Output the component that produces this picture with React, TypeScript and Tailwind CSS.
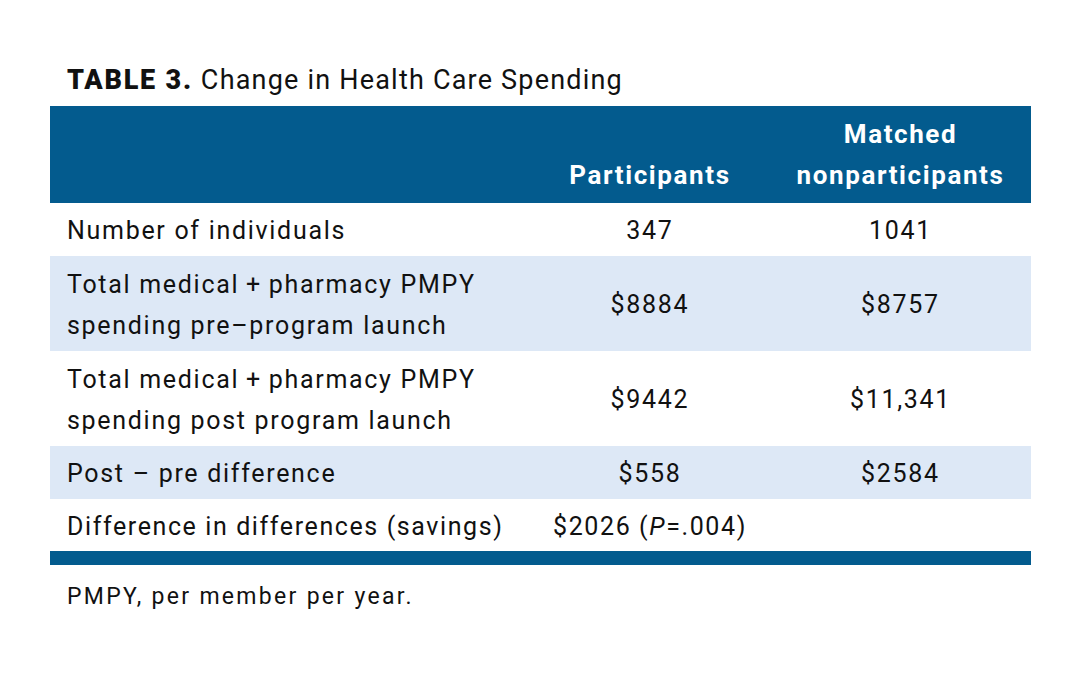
const rows = [
  { label: ["Number of individuals"], a: "347", b: "1041", shade: false },
  { label: ["Total medical\u2009+\u2009pharmacy PMPY", "spending pre\u2013program launch"], a: "$8884", b: "$8757", shade: true },
  { label: ["Total medical\u2009+\u2009pharmacy PMPY", "spending post program launch"], a: "$9442", b: "$11,341", shade: false },
  { label: ["Post \u2013 pre difference"], a: "$558", b: "$2584", shade: true },
];

export default function App() {
  return (
    <div className="w-[1081px] h-[673px] bg-white font-['Roboto',sans-serif] text-[#111] pt-[63px] pl-[50px]">
      <h1 className="pl-[17px] text-[27px] leading-[34px] tracking-[1.2px]">
        <span className="font-black tracking-[1.8px]">TABLE 3.</span> Change in Health Care Spending
      </h1>

      <div className="w-[981px] mt-[9px]">
        {/* header */}
        <div className="grid grid-cols-[480px_240px_261px] bg-[#035b8e] h-[97px] text-white font-bold text-[26px] leading-[41px] tracking-[1.6px]">
          <div />
          <div className="flex items-end justify-center pb-[7px]">Participants</div>
          <div className="flex flex-col items-center justify-end pb-[7px]">
            <span>Matched</span>
            <span>nonparticipants</span>
          </div>
        </div>

        {rows.map((r, i) => (
          <div
            key={i}
            className={`grid grid-cols-[480px_240px_261px] items-center text-[25px] leading-[41px] tracking-[1.7px] ${
              r.shade ? "bg-[#dde8f6]" : "bg-white"
            } ${r.label.length > 1 ? "h-[95px]" : "h-[53px]"}`}
          >
            <div className="pl-[17px] pt-[2px] flex flex-col">
              {r.label.map((l, j) => (
                <span key={j}>{l}</span>
              ))}
            </div>
            <div className="text-center pt-[2px]">{r.a}</div>
            <div className="text-center pt-[2px]">{r.b}</div>
          </div>
        ))}

        <div className="grid grid-cols-[480px_240px_261px] items-center h-[52px] text-[25px] leading-[41px] tracking-[1.6px]">
          <div className="pl-[17px] pt-[2px] whitespace-nowrap">Difference in differences (savings)</div>
          <div className="text-center pt-[2px] whitespace-nowrap">
            $2026 (<i>P</i>=.004)
          </div>
          <div />
        </div>

        <div className="h-[14px] bg-[#035b8e]" />

        <p className="pl-[17px] mt-[17px] text-[23px] leading-[30px] tracking-[2.3px]">PMPY, per member per year.</p>
      </div>
    </div>
  );
}
